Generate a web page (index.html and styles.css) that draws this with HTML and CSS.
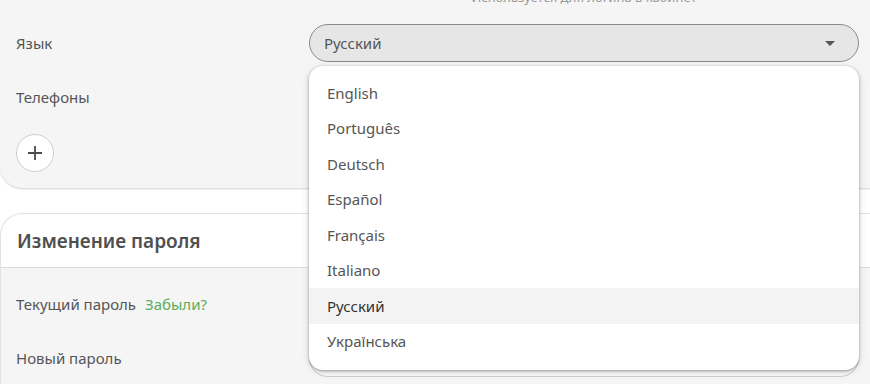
FILE: index.html
```html
<!DOCTYPE html>
<html lang="ru">
<head>
    <meta charset="UTF-8">
    <meta name="viewport" content="width=device-width, initial-scale=1.0">
    <title>Профиль</title>
    <link rel="stylesheet" href="styles.css">
</head>
<body>
    <div class="card card-main">
        <p class="hint">Используется для логина в кабинет</p>

        <div class="row">
            <label class="label">Язык</label>
            <div class="select-wrap">
                <div class="select">
                    <span>Русский</span>
                    <span class="caret"></span>
                </div>
                <ul class="menu">
                    <li>English</li>
                    <li>Português</li>
                    <li>Deutsch</li>
                    <li>Español</li>
                    <li>Français</li>
                    <li>Italiano</li>
                    <li class="active">Русский</li>
                    <li>Українська</li>
                </ul>
            </div>
        </div>

        <div class="row">
            <label class="label">Телефоны</label>
            <div class="field"></div>
        </div>

        <button class="add-btn" type="button" aria-label="Добавить">
            <svg width="16" height="16" viewBox="0 0 16 16">
                <path d="M8 1v14M1 8h14" stroke="#4a4a4a" stroke-width="1.8" fill="none"/>
            </svg>
        </button>
    </div>

    <div class="card card-password">
        <div class="card-head">
            <h3>Изменение пароля</h3>
        </div>
        <div class="card-body">
            <div class="row">
                <label class="label">Текущий пароль <a href="#" class="forgot">Забыли?</a></label>
                <div class="field"></div>
            </div>
            <div class="row">
                <label class="label">Новый пароль</label>
                <div class="field"></div>
            </div>
        </div>
    </div>
</body>
</html>
```

FILE: styles.css
```css
body {
    margin: 0;
    font-family: "Noto Sans", "Open Sans", sans-serif;
    font-size: 15px;
    color: #555;
    background: #fff;
    overflow: hidden;
}
.card {
    margin-right: -30px;
    background: #f5f5f5;
}
.card-main {
    padding: 0 41px 16px 16px;
    border-bottom-left-radius: 22px;
    box-shadow: 0 1px 2px rgba(0, 0, 0, 0.18);
}
.hint {
    margin: -12px 0 10px 293px;
    line-height: 18px;
    font-size: 13px;
    color: #9a9a9a;
    text-align: center;
}
.row {
    display: grid;
    grid-template-columns: 293px 1fr;
    align-items: center;
    min-height: 54px;
}
.label {
    display: flex;
    gap: 9px;
}
.forgot {
    color: #5aad5a;
    text-decoration: none;
}
.select-wrap {
    position: relative;
}
.select {
    display: flex;
    align-items: center;
    justify-content: space-between;
    height: 36px;
    padding: 0 23px 0 14px;
    border: 1px solid #8a8a8a;
    border-radius: 20px;
    background: #e6e6e6;
}
.caret {
    width: 0;
    height: 0;
    border-left: 5px solid transparent;
    border-right: 5px solid transparent;
    border-top: 5px solid #555;
}
.menu {
    position: absolute;
    top: 42px;
    left: 0;
    right: 0;
    z-index: 5;
    margin: 0;
    padding: 9px 0 11px;
    list-style: none;
    background: #fff;
    border-radius: 14px;
    box-shadow: 0 1px 3px rgba(0, 0, 0, 0.35), 0 2px 8px rgba(0, 0, 0, 0.12);
}
.menu li {
    display: flex;
    align-items: center;
    height: 35.5px;
    padding: 0 18px;
}
.menu li.active {
    background: #f3f3f3;
    color: #333;
}
.field {
    height: 36px;
    border: 1px solid #cfcfcf;
    border-radius: 20px;
    background: #fafafa;
}
.add-btn {
    display: flex;
    align-items: center;
    justify-content: center;
    width: 38px;
    height: 38px;
    margin-top: 10px;
    padding: 0;
    border: 1px solid #cfcfcf;
    border-radius: 50%;
    background: #fff;
}
.card-password {
    margin-top: 25px;
    border-top-left-radius: 22px;
    border-top: 1px solid #e2e2e2;
    border-left: 1px solid #e2e2e2;
}
.card-head {
    display: flex;
    align-items: center;
    height: 53px;
    padding: 0 16px;
    background: #fff;
    border-top-left-radius: 22px;
    border-bottom: 1px solid #dcdcdc;
}
.card-head h3 {
    margin: 0;
    font-size: 19px;
    font-weight: 600;
    color: #4f4f4f;
}
.card-body {
    padding: 9px 41px 0 15px;
}
```
